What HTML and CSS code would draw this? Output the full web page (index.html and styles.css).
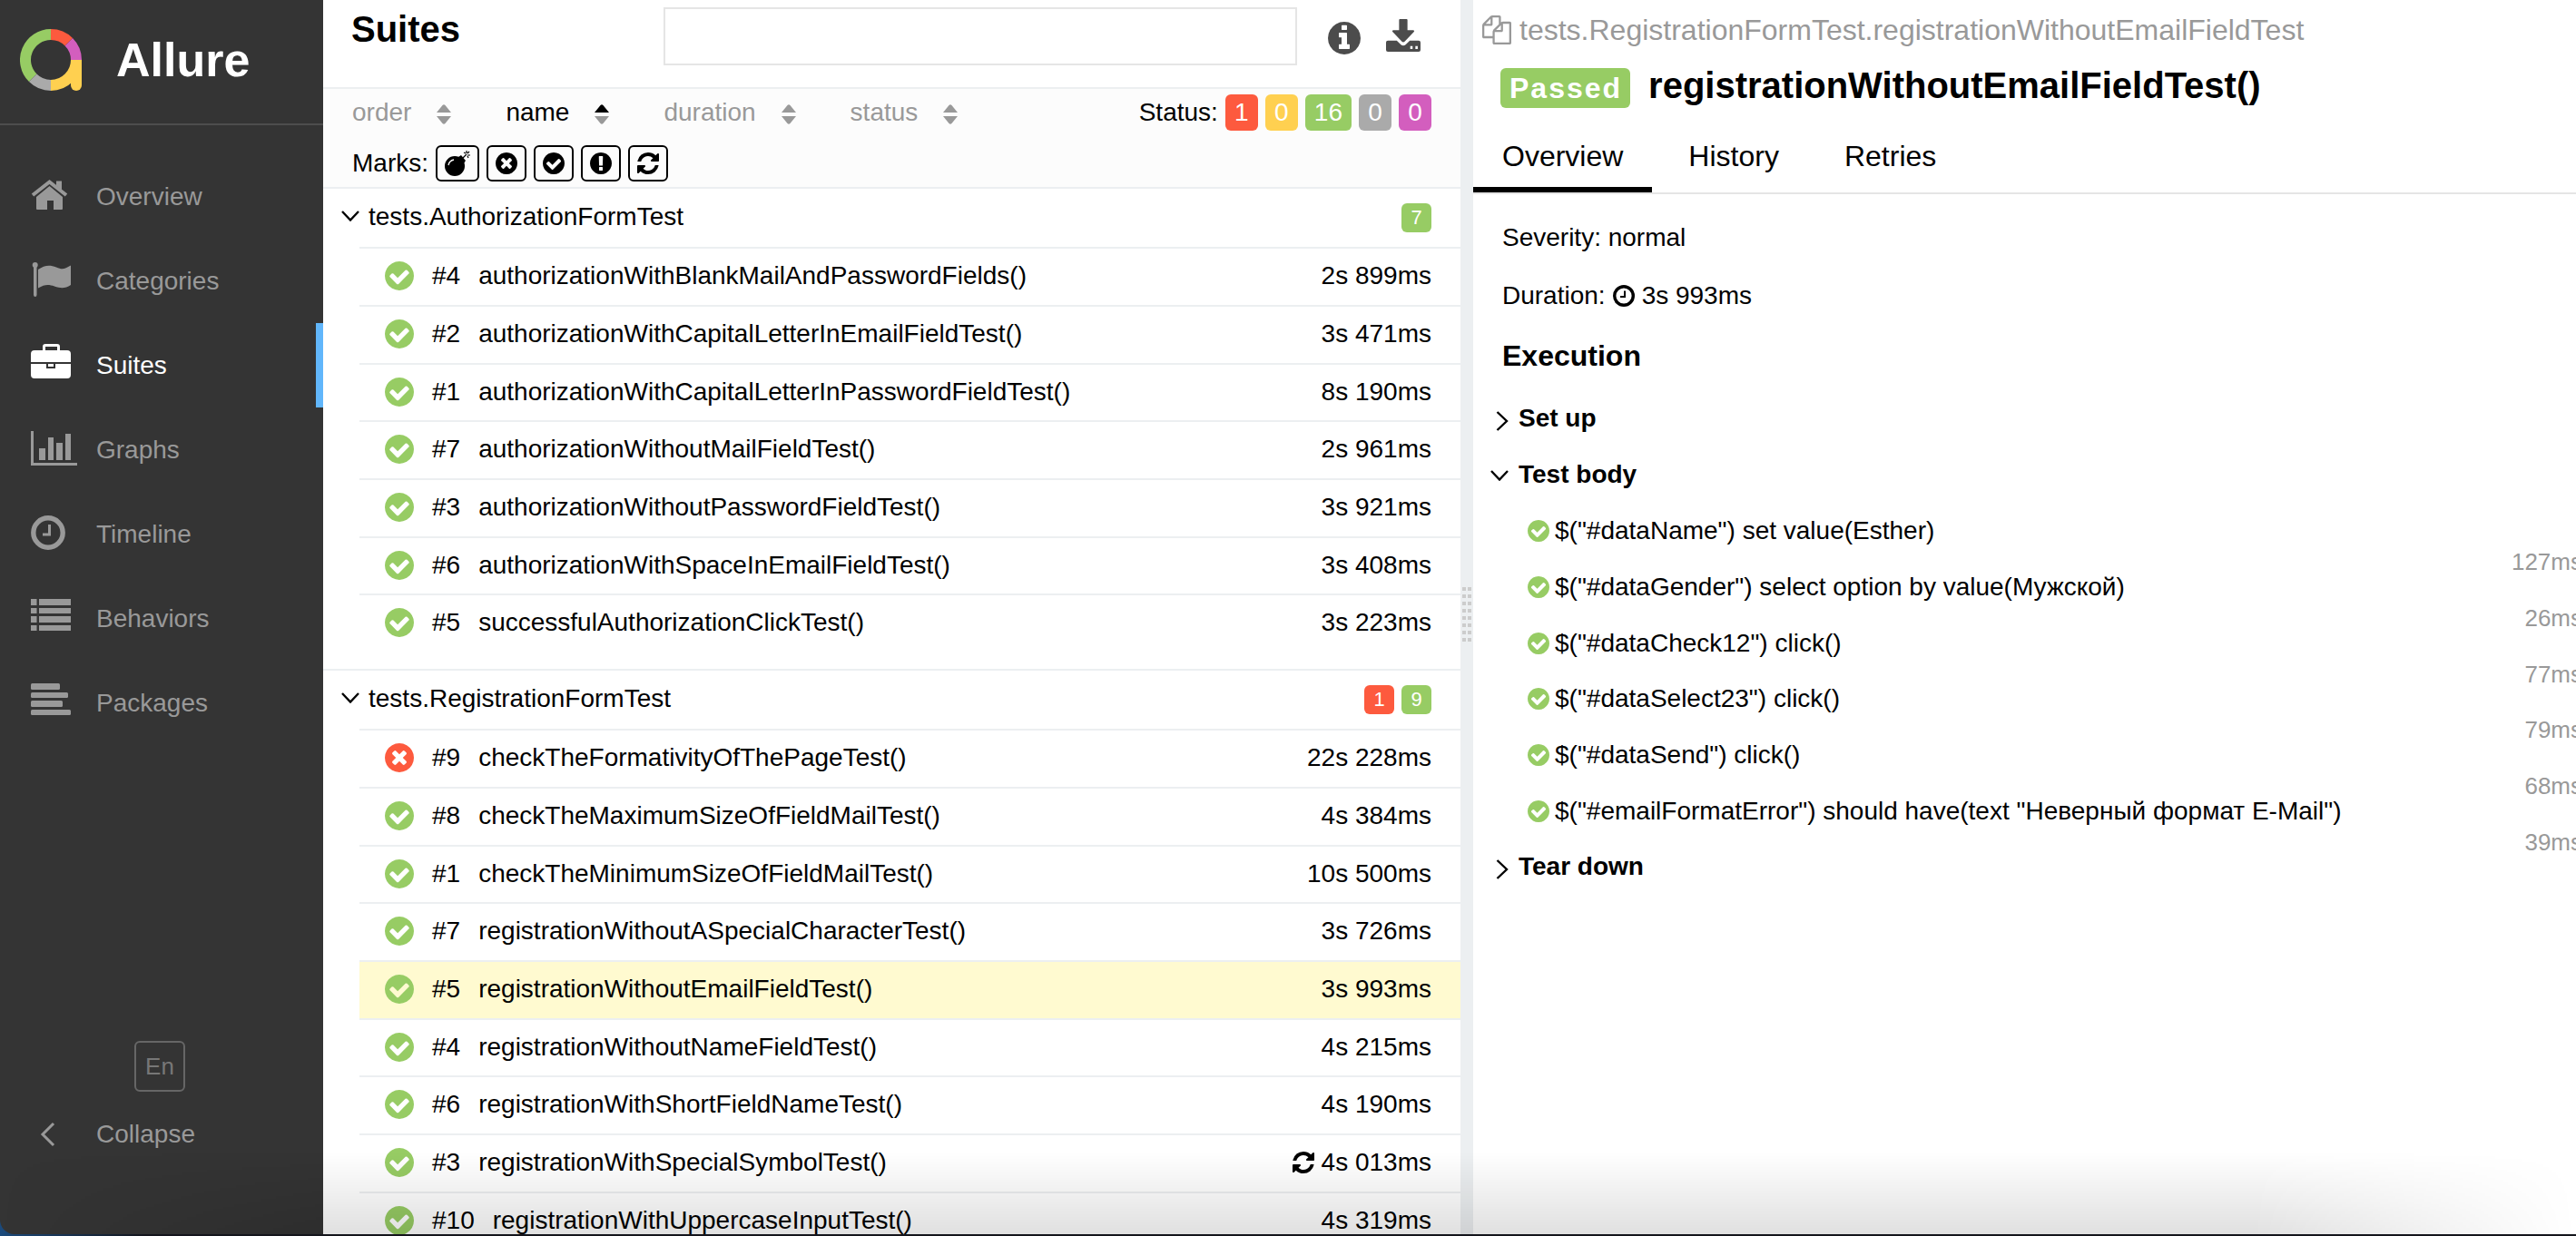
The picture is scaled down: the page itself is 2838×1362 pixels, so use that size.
FILE: index.html
```html
<!DOCTYPE html>
<html lang="en">
<head>
<meta charset="utf-8">
<title>Allure Report</title>
<link rel="stylesheet" href="styles.css">
</head>
<body>
<svg class="sprite" aria-hidden="true">
  <symbol id="passed" viewBox="128 128 1536 1536"><path d="M1412 734q0-28-18-46l-91-90q-19-19-45-19t-45 19l-408 407-226-226q-19-19-45-19t-45 19l-91 90q-18 18-18 46 0 27 18 45l362 362q19 19 45 19 27 0 46-19l543-543q18-18 18-45zm252 162q0 209-103 385.5t-279.5 279.5-385.5 103-385.5-103-279.5-279.5-103-385.5 103-385.5 279.5-279.5 385.5-103 385.5 103 279.5 279.5 103 385.5z"/></symbol>
  <symbol id="failed" viewBox="128 128 1536 1536"><path d="M1277 1122q0-26-19-45l-181-181 181-181q19-19 19-45 0-27-19-46l-90-90q-19-19-46-19-26 0-45 19l-181 181-181-181q-19-19-45-19-27 0-46 19l-90 90q-19 19-19 46 0 26 19 45l181 181-181 181q-19 19-19 45 0 27 19 46l90 90q19 19 46 19 26 0 45-19l181-181 181 181q19 19 45 19 27 0 46-19l90-90q19-19 19-46zm387-226q0 209-103 385.5t-279.5 279.5-385.5 103-385.5-103-279.5-279.5-103-385.5 103-385.5 279.5-279.5 385.5-103 385.5 103 279.5 279.5 103 385.5z"/></symbol>
  <symbol id="refresh" viewBox="128 128 1536 1536"><path d="M1639 1056q0 5-1 7-64 268-268 434.5t-478 166.5q-146 0-282.5-55t-243.5-157l-129 129q-19 19-45 19t-45-19-19-45v-448q0-26 19-45t45-19h448q26 0 45 19t19 45-19 45l-137 137q71 66 161 102t187 36q134 0 250-65t186-179q11-17 53-117 8-23 30-23h192q13 0 22.5 9.5t9.5 22.5zm25-800v448q0 26-19 45t-45 19h-448q-26 0-45-19t-19-45 19-45l138-138q-148-137-349-137-134 0-250 65t-186 179q-11 17-53 117-8 23-30 23h-199q-13 0-22.5-9.5t-9.5-22.5v-7q65-268 270-434.5t480-166.5q146 0 284 55.5t245 156.5l130-129q19-19 45-19t45 19 19 45z"/></symbol>
  <symbol id="chevron" viewBox="0 0 20 12"><path d="M1 1l9 9.500 9-9.500" fill="none" stroke="currentColor" stroke-width="2.400"/></symbol>
  <symbol id="chevron-right" viewBox="0 0 14 22"><path d="M1.500 1l10.500 10-10.500 10" fill="none" stroke="currentColor" stroke-width="2.400"/></symbol>
  <symbol id="sort" viewBox="0 0 16 22"><path class="sort-up" d="M0 9l6.500-8q1.500-1.500 3 0l6.500 8z"/><path class="sort-down" d="M0 13h16l-6.500 8q-1.500 1.500-3 0z"/></symbol>
</svg>

<div class="app">
  <aside class="sidebar">
    <a class="brand" href="#">
      <svg class="brand-logo" viewBox="0 0 68 68" fill="none" stroke-width="12">
        <path stroke="#97cc64" d="M14.200 53.800A28 28 0 0 1 34 6"/>
        <path stroke="#fd5a3e" d="M34 6A28 28 0 0 1 53.800 14.200"/>
        <path stroke="#d35ebe" d="M53.800 14.200A28 28 0 0 1 62 34"/>
        <path stroke="#ffd050" d="M62 34A28 28 0 0 1 34 62"/>
        <path stroke="#aaa" d="M34 62A28 28 0 0 1 14.200 53.800"/>
        <path fill="#ffd050" d="M56 34h12v28a6 6 0 0 1-12 0z"/>
      </svg>
      <span>Allure</span>
    </a>
    <nav class="nav">
      <a class="nav-item" href="#"><svg viewBox="0 0 52 42"><path d="M2 22L20.500 7.500 39 22" fill="none" stroke="currentColor" stroke-width="4"/><path d="M28 6.500h6v10l-6-5zM6 24l14.500-12L35 24v13q0 1-1 1h-9V28h-7v10H7q-1 0-1-1z"/></svg>Overview</a>
      <a class="nav-item" href="#"><svg viewBox="0 0 52 42"><circle cx="4.700" cy="6" r="3"/><path d="M3 7h3.500v32q0 2-1.700 2T3 39zM8 11c7-5 13-5.500 20-2.500s9 2 16-2V28c-6 4-11 4-18 1.500s-11-2-18 2z"/></svg>Categories</a>
      <a class="nav-item nav-item-active" href="#"><svg viewBox="0 0 52 42"><path d="M13 7V3q0-3 3-3h13q3 0 3 3v4h8q4 0 4 4v9H0v-9q0-4 4-4zm3 0h13V3H16zM0 22h17v5h10v-5h17v12q0 4-4 4H4q-4 0-4-4z"/><path d="M19 22h6v3h-6z"/></svg>Suites</a>
      <a class="nav-item" href="#"><svg viewBox="0 0 52 42"><path d="M0 3h3v35h48v3H0zM9 22h7v13H9zM19 10h6v25h-6zM28 16h7v19h-7zM38 6h6v29h-6z"/></svg>Graphs</a>
      <a class="nav-item" href="#"><svg viewBox="0 0 52 42" fill="none" stroke="currentColor"><circle cx="19" cy="22" r="16.200" fill="none" stroke-width="5.400"/><path d="M20.500 13v11H13" fill="none" stroke-width="3"/></svg>Timeline</a>
      <a class="nav-item" href="#"><svg viewBox="0 0 52 42"><path d="M0 2h6.500v7H0zM9 2h35v7H9zM0 12h6.500v6H0zM9 12h35v6H9zM0 21h6.500v7H0zM9 21h35v7H9zM0 31h6.500v6H0zM9 31h35v6H9z"/></svg>Behaviors</a>
      <a class="nav-item" href="#"><svg viewBox="0 0 52 42"><rect y="2" width="32" height="7" rx="1.500"/><rect y="12" width="41" height="6" rx="1.500"/><rect y="21" width="35" height="7" rx="1.500"/><rect y="31" width="44" height="6" rx="1.500"/></svg>Packages</a>
    </nav>
    <div class="sidebar-footer">
      <button class="language" type="button">En</button>
      <button class="nav-item" type="button"><svg viewBox="0 0 52 42"><path d="M25 12L13 24l12 12" fill="none" stroke="currentColor" stroke-width="3"/></svg>Collapse</button>
    </div>
  </aside>

  <main class="split">
    <section class="suites">
      <header class="suites-header">
        <h1 class="suites-title">Suites</h1>
        <input class="search" type="text" aria-label="Search">
        <button class="tool" type="button" aria-label="Information"><svg width="36" height="36" viewBox="128 128 1536 1536"><path d="M1152 1376v-160q0-14-9-23t-23-9h-96v-512q0-14-9-23t-23-9h-320q-14 0-23 9t-9 23v160q0 14 9 23t23 9h96v320h-96q-14 0-23 9t-9 23v160q0 14 9 23t23 9h448q14 0 23-9t9-23zm-128-896v-160q0-14-9-23t-23-9h-192q-14 0-23 9t-9 23v160q0 14 9 23t23 9h192q14 0 23-9t9-23zm640 416q0 209-103 385.500t-279.500 279.500-385.500 103-385.500-103-279.500-279.500-103-385.500 103-385.500 279.500-279.500 385.500-103 385.500 103 279.500 279.500 103 385.500z"/></svg></button>
        <button class="tool tool-download" type="button" aria-label="Download"><svg width="38" height="36" viewBox="0 0 37 35"><path fill-rule="evenodd" d="M15 0h7q1 0 1 1v11h6q2 0 1 1.500L20 24q-1.500 1.500-3 0L7 13.500Q6 12 8 12h6V1q0-1 1-1zM2 23h9.500l4.500 4.500q2.500 2 5 0l4.500-4.500H35q2 0 2 2v8q0 2-2 2H2q-2 0-2-2v-8q0-2 2-2zM26 29h2.500v3H26zM31.500 29H34v3h-2.500z"/></svg></button>
      </header>

      <div class="filters">
        <div class="filter-row">
          <div class="sorters">
            <button class="sorter" type="button">order <svg><use href="#sort"/></svg></button>
            <button class="sorter sorter-active" type="button">name <svg><use href="#sort"/></svg></button>
            <button class="sorter" type="button">duration <svg><use href="#sort"/></svg></button>
            <button class="sorter" type="button">status <svg><use href="#sort"/></svg></button>
          </div>
          <div class="statuses">
            <span>Status:</span>
            <button class="badge failed" type="button">1</button>
            <button class="badge broken" type="button">0</button>
            <button class="badge passed" type="button">16</button>
            <button class="badge skipped" type="button">0</button>
            <button class="badge unknown" type="button">0</button>
          </div>
        </div>
        <div class="marks">
          <span>Marks:</span>
          <button class="mark" type="button" aria-label="Flaky"><svg class="bomb" viewBox="0 0 28 28"><circle cx="11" cy="17" r="11"/><path d="M15 7l3-2 5 6-2 3z"/><path d="M20 8l4-4M24 0v3M27 1l-2 2M28 5h-3M26 8l-1-2M21 2l2 1" fill="none" stroke="currentColor" stroke-width="1.200"/><path d="M4 16q1-5 6-6" fill="none" stroke="#fcfcfc" stroke-width="1.300"/></svg></button>
          <button class="mark" type="button" aria-label="New failed"><svg><use href="#failed"/></svg></button>
          <button class="mark" type="button" aria-label="New passed"><svg><use href="#passed"/></svg></button>
          <button class="mark" type="button" aria-label="New broken"><svg viewBox="128 128 1536 1536"><path d="M896 128q209 0 385.500 103t279.500 279.500 103 385.500-103 385.500-279.500 279.500-385.500 103-385.500-103-279.500-279.500-103-385.500 103-385.500 279.500-279.500 385.500-103zm128 1247v-190q0-14-9-23.500t-22-9.500h-192q-13 0-23 10t-10 23v190q0 13 10 23t23 10h192q13 0 22-9.500t9-23.500zm-2-344l18-621q0-12-10-18-10-8-24-8h-220q-14 0-24 8-10 6-10 18l17 621q0 10 10 17.500t24 7.500h185q14 0 23.500-7.500t10.500-17.500z"/></svg></button>
          <button class="mark" type="button" aria-label="Retries"><svg><use href="#refresh"/></svg></button>
        </div>
      </div>

      <div class="tree">
        <section class="group">
          <button class="group-header" type="button">
            <svg class="chevron"><use href="#chevron"/></svg>
            <span class="group-name">tests.AuthorizationFormTest</span>
            <span class="count passed">7</span>
          </button>
          <div class="tests">
            <a class="test" href="#"><svg class="test-icon"><use href="#passed"/></svg><span>#4</span><span class="test-name">authorizationWithBlankMailAndPasswordFields()</span><span>2s 899ms</span></a>
            <a class="test" href="#"><svg class="test-icon"><use href="#passed"/></svg><span>#2</span><span class="test-name">authorizationWithCapitalLetterInEmailFieldTest()</span><span>3s 471ms</span></a>
            <a class="test" href="#"><svg class="test-icon"><use href="#passed"/></svg><span>#1</span><span class="test-name">authorizationWithCapitalLetterInPasswordFieldTest()</span><span>8s 190ms</span></a>
            <a class="test" href="#"><svg class="test-icon"><use href="#passed"/></svg><span>#7</span><span class="test-name">authorizationWithoutMailFieldTest()</span><span>2s 961ms</span></a>
            <a class="test" href="#"><svg class="test-icon"><use href="#passed"/></svg><span>#3</span><span class="test-name">authorizationWithoutPasswordFieldTest()</span><span>3s 921ms</span></a>
            <a class="test" href="#"><svg class="test-icon"><use href="#passed"/></svg><span>#6</span><span class="test-name">authorizationWithSpaceInEmailFieldTest()</span><span>3s 408ms</span></a>
            <a class="test" href="#"><svg class="test-icon"><use href="#passed"/></svg><span>#5</span><span class="test-name">successfulAuthorizationClickTest()</span><span>3s 223ms</span></a>
          </div>
        </section>
        <section class="group">
          <button class="group-header" type="button">
            <svg class="chevron"><use href="#chevron"/></svg>
            <span class="group-name">tests.RegistrationFormTest</span>
            <span class="count failed">1</span>
            <span class="count passed">9</span>
          </button>
          <div class="tests">
            <a class="test" href="#"><svg class="test-icon test-icon-failed"><use href="#failed"/></svg><span>#9</span><span class="test-name">checkTheFormativityOfThePageTest()</span><span>22s 228ms</span></a>
            <a class="test" href="#"><svg class="test-icon"><use href="#passed"/></svg><span>#8</span><span class="test-name">checkTheMaximumSizeOfFieldMailTest()</span><span>4s 384ms</span></a>
            <a class="test" href="#"><svg class="test-icon"><use href="#passed"/></svg><span>#1</span><span class="test-name">checkTheMinimumSizeOfFieldMailTest()</span><span>10s 500ms</span></a>
            <a class="test" href="#"><svg class="test-icon"><use href="#passed"/></svg><span>#7</span><span class="test-name">registrationWithoutASpecialCharacterTest()</span><span>3s 726ms</span></a>
            <a class="test test-selected" href="#"><svg class="test-icon"><use href="#passed"/></svg><span>#5</span><span class="test-name">registrationWithoutEmailFieldTest()</span><span>3s 993ms</span></a>
            <a class="test" href="#"><svg class="test-icon"><use href="#passed"/></svg><span>#4</span><span class="test-name">registrationWithoutNameFieldTest()</span><span>4s 215ms</span></a>
            <a class="test" href="#"><svg class="test-icon"><use href="#passed"/></svg><span>#6</span><span class="test-name">registrationWithShortFieldNameTest()</span><span>4s 190ms</span></a>
            <a class="test" href="#"><svg class="test-icon"><use href="#passed"/></svg><span>#3</span><span class="test-name">registrationWithSpecialSymbolTest()</span><svg class="retry"><use href="#refresh"/></svg><span>4s 013ms</span></a>
            <a class="test" href="#"><svg class="test-icon"><use href="#passed"/></svg><span>#10</span><span class="test-name">registrationWithUppercaseInputTest()</span><span>4s 319ms</span></a>
          </div>
        </section>
      </div>
    </section>

    <div class="gutter"><span class="grip"></span></div>

    <section class="detail">
      <div class="path">
        <svg width="32" height="32" viewBox="0 0 1792 1792"><path d="M1696 384q40 0 68 28t28 68v1216q0 40-28 68t-68 28h-960q-40 0-68-28t-28-68v-288h-544q-40 0-68-28t-28-68v-672q0-40 20-88t48-76l408-408q28-28 76-48t88-20h416q40 0 68 28t28 68v328q68-40 128-40h416zm-544 213l-299 299h299v-299zm-640-384l-299 299h299v-299zm196 647l316-316v-416h-384v416q0 40-28 68t-68 28h-416v640h512v-256q0-40 20-88t48-76zm956 804v-1152h-384v416q0 40-28 68t-68 28h-416v640h896z"/></svg>
        <span>tests.RegistrationFormTest.registrationWithoutEmailFieldTest</span>
      </div>
      <h2 class="detail-title"><span class="label passed">Passed</span>registrationWithoutEmailFieldTest()</h2>
      <nav class="tabs">
        <a class="tab tab-active" href="#">Overview</a>
        <a class="tab" href="#">History</a>
        <a class="tab" href="#">Retries</a>
      </nav>
      <div class="overview">
        <p class="fact">Severity: normal</p>
        <p class="fact">Duration: <svg class="clock" viewBox="0 0 24 24" stroke="currentColor"><circle cx="12" cy="12" r="10.300" stroke-width="3.400"/><path d="M13 6.500V13H8" stroke-width="2"/></svg> 3s 993ms</p>
        <h3 class="execution">Execution</h3>
        <button class="stage" type="button"><svg class="chevron-right"><use href="#chevron-right"/></svg>Set up</button>
        <button class="stage" type="button"><svg class="chevron"><use href="#chevron"/></svg>Test body</button>
        <ul class="steps">
          <li class="step"><svg><use href="#passed"/></svg><span>$("#dataName") set value(Esther)</span><span class="step-time">127ms</span></li>
          <li class="step"><svg><use href="#passed"/></svg><span>$("#dataGender") select option by value(Мужской)</span><span class="step-time">26ms</span></li>
          <li class="step"><svg><use href="#passed"/></svg><span>$("#dataCheck12") click()</span><span class="step-time">77ms</span></li>
          <li class="step"><svg><use href="#passed"/></svg><span>$("#dataSelect23") click()</span><span class="step-time">79ms</span></li>
          <li class="step"><svg><use href="#passed"/></svg><span>$("#dataSend") click()</span><span class="step-time">68ms</span></li>
          <li class="step"><svg><use href="#passed"/></svg><span>$("#emailFormatError") should have(text "Неверный формат E-Mail")</span><span class="step-time">39ms</span></li>
        </ul>
        <button class="stage" type="button"><svg class="chevron-right"><use href="#chevron-right"/></svg>Tear down</button>
      </div>
    </section>
  </main>
  <div class="dock-shadow"></div>
</div>
</body>
</html>
```

FILE: styles.css
```css
* {
  box-sizing: border-box;
}

body {
  margin: 0;
  height: 100vh;
  padding-bottom: 2px;
  overflow: hidden;
  background: linear-gradient(to right, #1b4a7c, #14151c 160px);
  color: #000;
  font: 28px/32px "Liberation Sans", Arial, sans-serif;
}

a {
  color: inherit;
  text-decoration: none;
}

button {
  margin: 0;
  padding: 0;
  border: 0;
  background: none;
  color: inherit;
  font: inherit;
  text-align: left;
}

svg {
  display: block;
  flex: none;
  fill: currentColor;
}

.sprite {
  display: none;
}

.app {
  display: flex;
  height: 100%;
  position: relative;
}

/* Sidebar */

.sidebar {
  display: flex;
  flex-direction: column;
  flex: 0 0 356px;
  background: #343434;
  border-bottom-left-radius: 16px;
  color: #999;
}

.brand {
  display: flex;
  align-items: center;
  gap: 38px;
  padding: 32px 22px 36px;
  border-bottom: 2px solid #4d4d4d;
  color: #fff;
  font-size: 52px;
  font-weight: bold;
  line-height: 60px;
}

.brand-logo {
  width: 68px;
  height: 68px;
}

.brand-logo path[stroke] {
  fill: none;
}

.nav {
  padding-top: 32px;
}

.nav-item {
  display: flex;
  align-items: center;
  gap: 20px;
  width: 100%;
  height: 93px;
  padding-left: 34px;
  border-right: 8px solid transparent;
}

.nav-item svg {
  width: 52px;
  height: 42px;
  margin-bottom: 6px;
}

.nav-item-active {
  border-right-color: #61b6fb;
  color: #fff;
}

.sidebar-footer {
  margin-top: auto;
  padding-bottom: 64px;
}

.language {
  display: block;
  width: 56px;
  height: 56px;
  margin-left: 148px;
  border: 2px solid #666;
  border-radius: 6px;
  color: #777;
  font-size: 26px;
  text-align: center;
}

/* Split view */

.split {
  display: flex;
  flex: 1;
  min-width: 0;
}

.suites {
  display: flex;
  flex-direction: column;
  flex: 1253 1 0;
  min-width: 0;
  overflow: hidden;
  background: #fff;
}

.gutter {
  display: flex;
  align-items: center;
  justify-content: center;
  flex: 0 0 14px;
  background: #eceff1;
}

.grip {
  width: 10px;
  height: 60px;
  margin-bottom: 6px;
  background: repeating-linear-gradient(to bottom, transparent 0 4px, #eceff1 4px 8px),
    linear-gradient(to right, #ccc 4px, transparent 4px 6px, #ccc 6px);
}

.detail {
  flex: 1215 1 0;
  min-width: 0;
  overflow: hidden;
  background: #fff;
}

/* Suites header and filters */

.suites-header {
  display: flex;
  align-items: flex-start;
  padding: 8px 44px 24px 0;
  border-bottom: 2px solid #eceff1;
}

.suites-title {
  flex: 0 0 31%;
  margin: 0;
  padding-left: 31px;
  font-size: 40px;
  line-height: 48px;
}

.search {
  flex: 1;
  min-width: 0;
  height: 64px;
  padding: 0 16px;
  border: 2px solid #e5e5e5;
  font: inherit;
}

.tool {
  margin: 16px 0 0 34px;
  color: #4c4c4c;
}

.tool-download {
  margin: 13px 0 0 28px;
}

.filters {
  display: flex;
  flex-direction: column;
  gap: 16px;
  padding: 6px 32px;
  border-bottom: 2px solid #eceff1;
  background: #fcfcfc;
  line-height: 40px;
}

.filter-row {
  display: flex;
  justify-content: space-between;
}

.sorters {
  display: flex;
  gap: 60px;
}

.sorter {
  display: flex;
  align-items: center;
  gap: 28px;
  color: #999;
}

.sorter svg {
  width: 16px;
  height: 22px;
  margin-top: 4px;
}

.sorter-active,
.sorter-active svg {
  color: #000;
}

.sort-down {
  fill: #999;
}

.statuses,
.marks {
  display: flex;
  gap: 8px;
}

.badge,
.count {
  padding: 0 10px;
  border-radius: 6px;
  color: #fff;
  text-align: center;
}

.badge {
  min-width: 36px;
}

.count {
  min-width: 33px;
  font-size: 22px;
}

.mark {
  display: flex;
  align-items: center;
  justify-content: center;
  width: 44px;
  height: 40px;
  border: 2px solid #000;
  border-radius: 6px;
}

.mark svg {
  width: 24px;
  height: 24px;
}

.mark .bomb {
  width: 28px;
  height: 28px;
}

.mark:has(.bomb) {
  width: 48px;
}

.passed {
  background: #97cc64;
}

.failed {
  background: #fd5a3e;
}

.broken {
  background: #ffd050;
}

.skipped {
  background: #aaa;
}

.unknown {
  background: #d35ebe;
}

/* Test tree */

.tree {
  flex: 1;
  min-height: 0;
  overflow: hidden;
}

.group {
  padding-bottom: 19px;
}

.group + .group {
  border-top: 2px solid #eceff1;
}

.group-header {
  display: flex;
  align-items: center;
  gap: 8px;
  width: 100%;
  height: 64px;
  padding: 0 32px 0 20px;
}

.chevron {
  width: 20px;
  height: 12px;
  margin-bottom: 4px;
}

.group-name {
  flex: 1;
  padding: 0 0 2px 2px;
}

.tests {
  padding-left: 40px;
}

.test {
  display: flex;
  align-items: center;
  gap: 20px;
  height: 64px;
  padding: 0 32px 2px 28px;
  border-top: 2px solid #eceff1;
}

.test:nth-child(3n) {
  height: 63px;
}

.test-selected {
  background: #fffad0;
}

.test-name {
  flex: 1;
}

.test-icon {
  width: 32px;
  height: 32px;
  color: #97cc64;
}

.test-icon-failed {
  color: #fd5a3e;
}

.retry {
  width: 24px;
  height: 24px;
  margin-right: -12px;
}

/* Test details */

.path {
  display: flex;
  align-items: center;
  gap: 9px;
  padding: 15px 0 0 10px;
  color: #999;
  font-size: 32px;
  line-height: 36px;
}

.detail-title {
  display: flex;
  align-items: baseline;
  gap: 20px;
  margin: 21px 0 0;
  padding-left: 30px;
  font-size: 40px;
  line-height: 44px;
}

.label {
  padding: 0 9px 0 10px;
  border-radius: 6px;
  color: #fff;
  font-size: 32px;
  letter-spacing: 2px;
}

.tabs {
  display: flex;
  gap: 8px;
  margin-top: 35px;
  border-bottom: 2px solid #e5e5e5;
  font-size: 32px;
  line-height: 36px;
}

.tab {
  padding: 0 32px 16px;
  border-bottom: 6px solid transparent;
}

.tab-active {
  border-bottom-color: #000;
}

.overview {
  padding: 32px 0 0 32px;
}

.fact {
  display: flex;
  gap: 8px;
  margin: 0 0 32px;
}

.clock {
  width: 24px;
  height: 24px;
  margin-top: 4px;
  fill: none;
}

.execution {
  margin: 0 0 35px;
  font-size: 32px;
  line-height: 36px;
}

.stage {
  display: flex;
  gap: 11px;
  width: 100%;
  height: 62px;
  margin-left: -13px;
  font-weight: bold;
}

.stage .chevron {
  margin-top: 11px;
}

.chevron-right {
  width: 14px;
  height: 22px;
  margin: 8px 0 0 6px;
}

.steps {
  margin: 0 -7px 0 0;
  padding: 0 0 0 28px;
  list-style: none;
}

.step {
  display: grid;
  grid-template-columns: 24px 1fr;
  grid-template-rows: 32px 30px;
  gap: 3px 6px;
  height: 62px;
}

.step:nth-child(3n) {
  height: 61px;
}

.step svg {
  width: 24px;
  height: 24px;
  margin-top: 4px;
  color: #97cc64;
}

.step-time {
  grid-column: 2;
  color: #999;
  font-size: 26px;
  line-height: 30px;
  text-align: right;
}

/* Shade cast on the lower edge of the window */

.dock-shadow {
  position: absolute;
  right: 0;
  bottom: 0;
  left: 0;
  height: 90px;
  background: linear-gradient(to bottom, transparent, rgba(0, 0, 0, 0.12));
  -webkit-mask-image: linear-gradient(to right, transparent, #000 356px, #000 calc(100% - 356px), transparent);
  mask-image: linear-gradient(to right, transparent, #000 356px, #000 calc(100% - 356px), transparent);
  pointer-events: none;
}
```
